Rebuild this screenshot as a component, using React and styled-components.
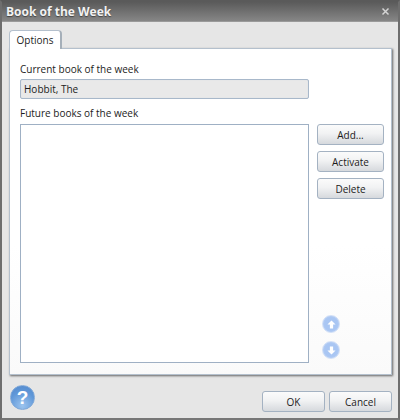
import styled, { createGlobalStyle } from "styled-components";

const GlobalStyle = createGlobalStyle`
  html, body {
    margin: 0;
    padding: 0;
  }
  body {
    font-family: "Open Sans", "Noto Sans", sans-serif;
    font-size: 10px;
    color: #1c1c1c;
  }
`;

const App = () => {
  return (
    <Dialog>
      <GlobalStyle />
      <TitleBar>
        <Title>Book of the Week</Title>
        <CloseIcon width="9" height="9" viewBox="0 0 9 9">
          <path d="M1.5 1.5l6 6M7.5 1.5l-6 6" stroke="#d4d4d4" strokeWidth="1.5" fill="none" />
        </CloseIcon>
      </TitleBar>
      <Body>
        <Tabs>
          <Tab>Options</Tab>
        </Tabs>
        <Panel>
          <FieldLabel>Current book of the week</FieldLabel>
          <ReadOnlyField>Hobbit, The</ReadOnlyField>
          <ListLabel>Future books of the week</ListLabel>
          <ListRow>
            <ListBox />
            <SideColumn>
              <ActionButton>Add...</ActionButton>
              <ActionButton>Activate</ActionButton>
              <ActionButton>Delete</ActionButton>
              <Arrows>
                <ArrowIcon />
                <ArrowIcon down />
              </Arrows>
            </SideColumn>
          </ListRow>
        </Panel>
        <Footer>
          <HelpIcon>?</HelpIcon>
          <FooterButtons>
            <FooterButton>OK</FooterButton>
            <FooterButton>Cancel</FooterButton>
          </FooterButtons>
        </Footer>
      </Body>
    </Dialog>
  );
};

const ArrowIcon = ({ down }) => (
  <ArrowCircle>
    <ArrowGlyph $down={down} width="9" height="9" viewBox="0 0 10 10">
      <path d="M5 0.5L9.5 5H6.8V9.5H3.2V5H0.5Z" fill="#fff" />
    </ArrowGlyph>
  </ArrowCircle>
);

export default App;

const Dialog = styled.div`
  width: 400px;
  height: 420px;
  box-sizing: border-box;
  display: flex;
  flex-direction: column;
  background: #e6e6e6;
  border: 2px solid #6e6e6e;
  border-top-color: #5a5a5a;
  border-bottom-color: #777;
`;

const TitleBar = styled.div`
  height: 19px;
  flex: none;
  display: flex;
  align-items: center;
  justify-content: space-between;
  padding: 0 8px 0 4px;
  background: linear-gradient(#5a5a5a, #868686);
  border-bottom: 1px solid #9a9a9a;
`;

const Title = styled.div`
  font-family: "Open Sans", sans-serif;
  font-size: 12px;
  font-weight: 700;
  color: #f2f2f2;
  text-shadow: 0 1px 1px #444;
`;

const CloseIcon = styled.svg`
  display: block;
`;

const Body = styled.div`
  flex: 1;
  display: flex;
  flex-direction: column;
  padding: 8px 6px 0 7px;
  min-height: 0;
`;

const Tabs = styled.div`
  display: flex;
  height: 18px;
  flex: none;
`;

const Tab = styled.div`
  width: 53px;
  height: 19px;
  box-sizing: border-box;
  position: relative;
  z-index: 1;
  display: flex;
  align-items: center;
  justify-content: center;
  background: #fff;
  border: 1px solid #b4c0cd;
  border-bottom: none;
  border-right: 2px solid #a5afb9;
  border-radius: 4px 4px 0 0;
`;

const Panel = styled.div`
  height: 327px;
  flex: none;
  box-sizing: border-box;
  display: flex;
  flex-direction: column;
  padding: 13px 6px 11px 10px;
  background: linear-gradient(#fff 60%, #fafafa);
  border: 1px solid #b4c0cd;
  box-shadow: 1px 1px 2px #666;
`;

const FieldLabel = styled.div`
  height: 15px;
  line-height: 15px;
  margin-bottom: 2px;
`;

const ReadOnlyField = styled.div`
  width: 289px;
  height: 20px;
  flex: none;
  box-sizing: border-box;
  display: flex;
  align-items: center;
  padding-left: 3px;
  background: #e9e9e9;
  border: 1px solid #a8b8ca;
  border-radius: 2px;
  box-shadow: inset 0 0 1px #c8d2dc;
`;

const ListLabel = styled(FieldLabel)`
  margin-top: 7px;
  margin-bottom: 3px;
`;

const ListRow = styled.div`
  flex: 1;
  display: flex;
  gap: 8px;
`;

const ListBox = styled.div`
  width: 289px;
  height: 239px;
  box-sizing: border-box;
  background: #fff;
  border: 1px solid #9fb0c4;
`;

const SideColumn = styled.div`
  width: 67px;
  display: flex;
  flex-direction: column;
  gap: 6px;
`;

const ActionButton = styled.button`
  width: 67px;
  height: 21px;
  flex: none;
  padding: 0;
  font: inherit;
  color: #1c1c1c;
  background: linear-gradient(#fbfbfb, #f1f2f3 45%, #d6d9dd);
  border: 1px solid #a4b2c2;
  border-radius: 3px;
`;

const Arrows = styled.div`
  display: flex;
  flex-direction: column;
  gap: 8px;
  padding: 110px 0 0 5px;
`;

const ArrowCircle = styled.div`
  width: 18px;
  height: 18px;
  box-sizing: border-box;
  display: flex;
  align-items: center;
  justify-content: center;
  border-radius: 50%;
  background: radial-gradient(circle at 50% 50%, #a9c6f3 55%, #c3d6f6);
  border: 1px solid #d2e0f7;
`;

const ArrowGlyph = styled.svg`
  transform: ${({ $down }) => ($down ? "rotate(180deg)" : "none")};
`;

const Footer = styled.div`
  flex: 1;
  display: flex;
  align-items: flex-start;
  justify-content: space-between;
  padding: 8px 0 0 1px;
`;

const HelpIcon = styled.div`
  width: 25px;
  height: 25px;
  margin-top: 2px;
  display: flex;
  align-items: center;
  justify-content: center;
  border-radius: 50%;
  background: radial-gradient(circle at 50% 85%, #9cc4ee, #5f97d8 60%, #5288cc);
  border: 1px solid #7fa8d8;
  box-sizing: border-box;
  font-family: "Liberation Sans", sans-serif;
  font-size: 19px;
  font-weight: 700;
  color: #fff;
`;

const FooterButtons = styled.div`
  display: flex;
  gap: 4px;
  padding-top: 8px;
`;

const FooterButton = styled(ActionButton)`
  width: 63px;
`;
